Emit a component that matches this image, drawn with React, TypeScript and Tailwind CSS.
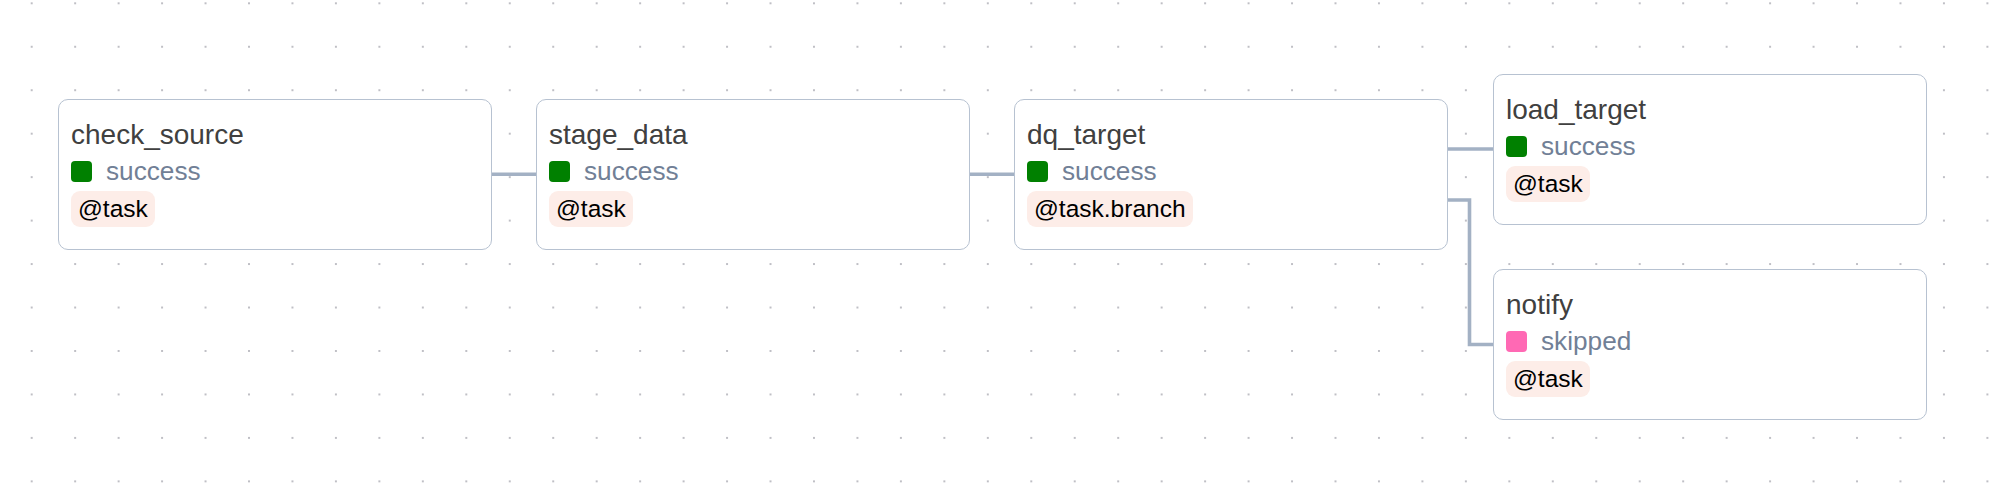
import React from "react";

type TaskNode = {
  id: string;
  label: string;
  state: "success" | "skipped";
  operator: string;
  left: string;
  top: string;
};

// positions on the graph canvas (already at the canvas zoom)
const nodes: TaskNode[] = [
  { id: "check_source", label: "check_source", state: "success", operator: "@task", left: "left-[58px]", top: "top-[99px]" },
  { id: "stage_data", label: "stage_data", state: "success", operator: "@task", left: "left-[536px]", top: "top-[99px]" },
  { id: "dq_target", label: "dq_target", state: "success", operator: "@task.branch", left: "left-[1014px]", top: "top-[99px]" },
  { id: "load_target", label: "load_target", state: "success", operator: "@task", left: "left-[1493px]", top: "top-[74px]" },
  { id: "notify", label: "notify", state: "skipped", operator: "@task", left: "left-[1493px]", top: "top-[269px]" },
];

const edgePaths = [
  "M492 174.3 H536",
  "M970 174.3 H1014",
  "M1448 149 H1493",
  "M1448 200 H1469.5 V344.5 H1493",
];

function StateBox({ state }: { state: TaskNode["state"] }) {
  return (
    <span
      className={
        state === "success"
          ? "block w-[21px] h-[21px] rounded-[4px] bg-[#008000]"
          : "block w-[21px] h-[21px] rounded-[4px] bg-[#ff69b4]"
      }
    />
  );
}

function TaskCard({ node }: { node: TaskNode }) {
  return (
    <div
      className={`absolute ${node.left} ${node.top} w-[434px] h-[151px] box-border rounded-[10px] border border-[#b7c2d1] bg-white pl-[12px] pt-[17px]`}
    >
      <div className="text-[28px] leading-[36px] text-[#404040]">{node.label}</div>
      <div className="flex items-center h-[36px] gap-[14px]">
        <StateBox state={node.state} />
        <span className="text-[26.2px] leading-[36px] text-[#718096]">{node.state}</span>
      </div>
      <div className="mt-[2px] inline-flex h-[36px] items-center rounded-[9px] bg-[#fdede8] px-[7px] text-[24.5px] leading-[36px] text-black">
        {node.operator}
      </div>
    </div>
  );
}

export default function App() {
  return (
    <div className="relative w-[2000px] h-[486px] overflow-hidden bg-white font-['Liberation_Sans',Arial,sans-serif]">
      {/* dotted canvas background */}
      <svg className="absolute inset-0" width="2000" height="486">
        <defs>
          <pattern id="dots" x="9.97" y="-18.43" width="43.46" height="43.46" patternUnits="userSpaceOnUse">
            <circle cx="21.73" cy="21.73" r="1" fill="#a9a9b2" />
          </pattern>
        </defs>
        <rect width="2000" height="486" fill="url(#dots)" />
      </svg>

      {/* edges */}
      <svg className="absolute inset-0" width="2000" height="486">
        {edgePaths.map((d) => (
          <path key={d} d={d} fill="none" stroke="#a3b1c4" strokeWidth="3.6" />
        ))}
      </svg>

      {nodes.map((n) => (
        <TaskCard key={n.id} node={n} />
      ))}
    </div>
  );
}
